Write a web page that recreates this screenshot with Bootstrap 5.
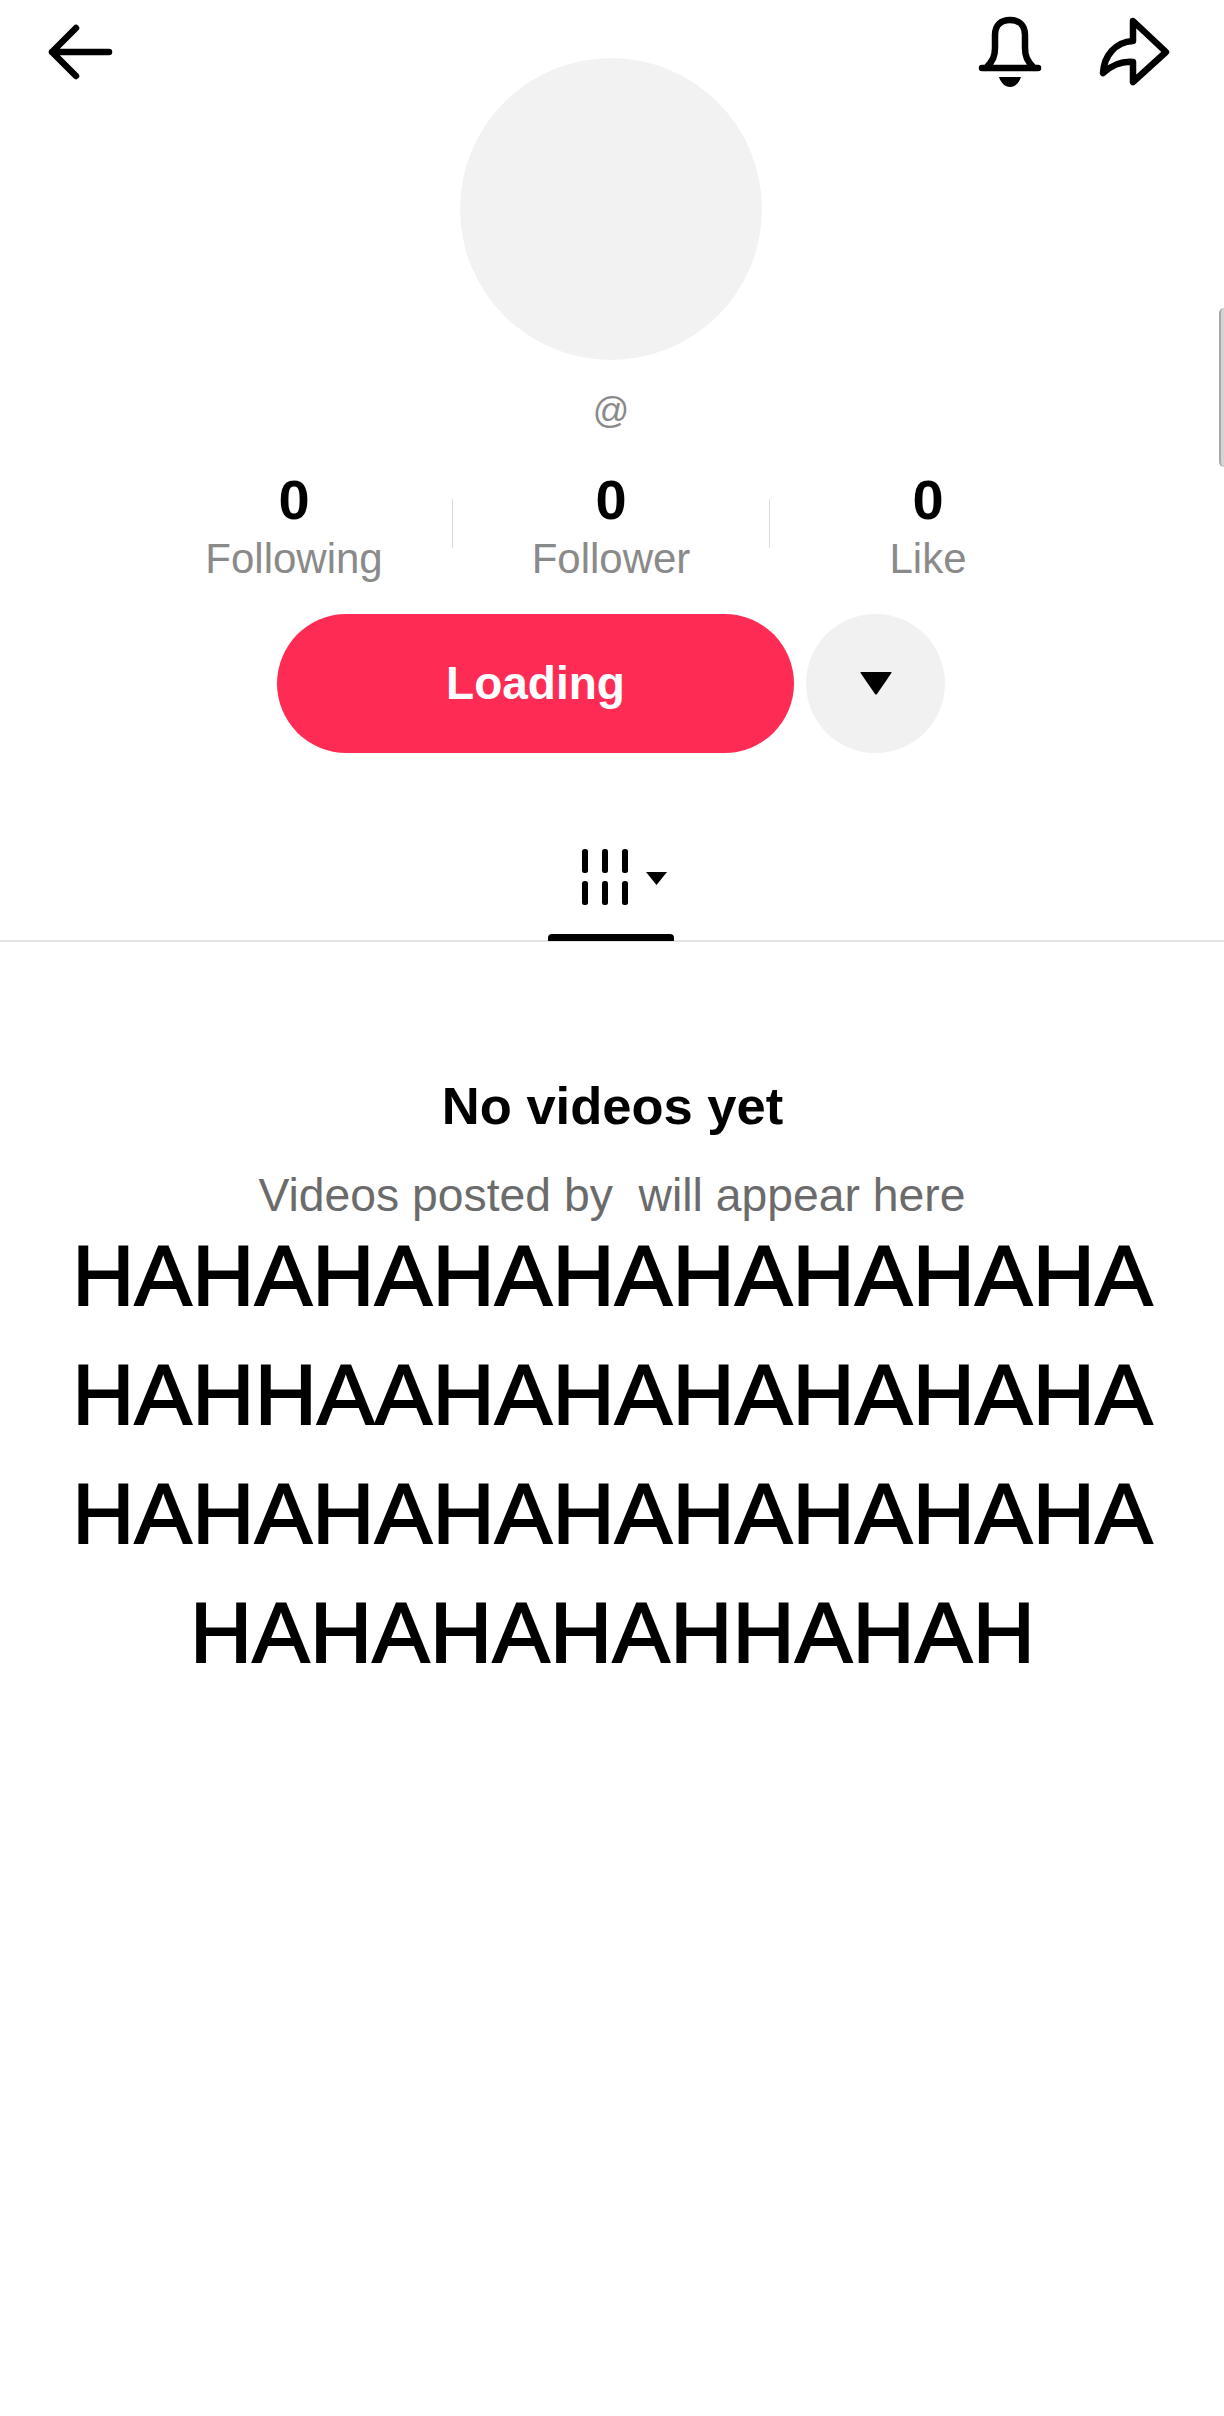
<!DOCTYPE html>
<html lang="en">
  <head>
    <meta charset="UTF-8" />
    <meta name="viewport" content="width=device-width, initial-scale=1.0" />
    <title>Profile</title>
    <link href="https://cdn.jsdelivr.net/npm/bootstrap@5.3.3/dist/css/bootstrap.min.css" rel="stylesheet" />
    <style>
      body { font-family: "Liberation Sans", Arial, sans-serif; background: #fff; color: #000; height: 2416px; overflow: hidden; }
      .page-wrap { position: relative; height: 2416px; overflow: hidden; }
      .top-grid { display: grid; grid-template-columns: 1fr 302px 1fr; padding-right: 3px; }
      .back-icon { display: block; margin: 17px 0 0 42px; }
      .top-actions { padding: 14px 50px 0 0; gap: 55px; }
      .avatar-blank { width: 302px; height: 302px; margin-top: 58px; background: #f2f2f2; }
      .handle-text { font-size: 36px; line-height: 40px; color: #8a8a8a; margin-top: 31px; padding-right: 2px; }
      .stat-row { margin-top: 39px; padding-right: 2px; }
      .stat-col { width: 316px; }
      .stat-num { font-size: 56px; line-height: 60px; font-weight: 700; }
      .stat-label { font-size: 42px; line-height: 50px; color: #8a8a8a; margin-top: 4px; }
      .stat-line { width: 1px; height: 49px; margin-top: 29px; background: #dcdcde; }
      .action-row { margin-top: 30px; gap: 12px; padding-right: 2px; }
      .follow-pill { width: 517px; height: 139px; border: 0; border-radius: 70px; background: #fe2c55; color: #fff; font-size: 46px; font-weight: 700; padding: 0; }
      .more-round { width: 139px; height: 139px; border: 0; border-radius: 50%; background: #f1f1f2; padding: 0; }
      .tab-bar { height: 189px; border-bottom: 2px solid #e3e3e4; position: relative; }
      .tab-icon { display: block; position: absolute; left: 580px; top: 92px; }
      .tab-mark { position: absolute; left: 548px; bottom: -1px; width: 126px; height: 7px; background: #000; border-radius: 4px 4px 0 0; }
      .empty-title { font-size: 52.500px; line-height: 60px; font-weight: 700; margin-top: 134px; padding-left: 1px; }
      .empty-note { font-size: 46.300px; line-height: 54px; color: #6b6b6b; margin-top: 32px; white-space: pre; }
      .shout-text { font-size: 86px; line-height: 119px; margin-top: -6px; padding-left: 1px; letter-spacing: 0.300px; -webkit-text-stroke: 1.800px #000; }
      .edge-handle { position: absolute; right: 0; top: 308px; width: 5px; height: 159px; background: #d4d4d4; border-left: 2px solid #a9a9a9; border-radius: 6px 0 0 6px; }
    </style>
  </head>
  <body>
    <div class="page-wrap">
      <!--top icons and avatar-->
      <div class="top-grid">
        <div>
          <svg class="back-icon" width="76" height="68" viewBox="0 0 76 68" fill="none" stroke="#000" stroke-width="6.5" stroke-linecap="round" stroke-linejoin="round">
            <path d="M34 11 L10 35 L34 59 M10 35 H67" />
          </svg>
        </div>
        <div class="avatar-blank rounded-circle"></div>
        <div class="top-actions d-flex justify-content-end align-items-start">
          <svg width="68" height="76" viewBox="0 0 68 76" fill="none" stroke="#000" stroke-width="6.5" stroke-linecap="round" stroke-linejoin="round">
            <path d="M6 54 H62 M10 54 C17 47 19 42 19 34 V21 C19 11 25 6 34 6 C43 6 49 11 49 21 V34 C49 42 51 47 58 54" />
            <path d="M23 63 H45 C43 69 39 73 34 73 C29 73 25 69 23 63 Z" fill="#000" stroke="none" />
          </svg>
          <svg width="72" height="72" viewBox="0 0 72 72" fill="none" stroke="#000" stroke-width="6.5" stroke-linecap="round" stroke-linejoin="round">
            <path d="M34 7 L67 38 L34 68 V48 C22 47 12 52 4 59 C5 42 16 28 34 27 Z" />
          </svg>
        </div>
      </div>

      <div class="handle-text text-center">@</div>

      <!--stats-->
      <div class="stat-row d-flex justify-content-center">
        <div class="stat-col text-center">
          <div class="stat-num">0</div>
          <div class="stat-label">Following</div>
        </div>
        <div class="stat-line"></div>
        <div class="stat-col text-center">
          <div class="stat-num">0</div>
          <div class="stat-label">Follower</div>
        </div>
        <div class="stat-line"></div>
        <div class="stat-col text-center">
          <div class="stat-num">0</div>
          <div class="stat-label">Like</div>
        </div>
      </div>

      <!--buttons-->
      <div class="action-row d-flex justify-content-center">
        <button class="btn follow-pill" type="button">Loading</button>
        <button class="btn more-round d-flex align-items-center justify-content-center" type="button" aria-label="More">
          <svg width="32" height="23" viewBox="0 0 32 23"><path d="M1 0 H31 Q32 0 31.4 1 L17 22 Q16 23 15 22 L0.6 1 Q0 0 1 0 Z" fill="#000" /></svg>
        </button>
      </div>

      <!--tab-->
      <div class="tab-bar">
        <svg class="tab-icon" width="90" height="60" viewBox="0 0 90 60" fill="#000">
          <rect x="2" y="4" width="6" height="24" rx="2.5" /><rect x="22" y="4" width="6" height="24" rx="2.5" /><rect x="42" y="4" width="6" height="24" rx="2.5" />
          <rect x="2" y="36" width="6" height="24" rx="2.5" /><rect x="22" y="36" width="6" height="24" rx="2.5" /><rect x="42" y="36" width="6" height="24" rx="2.5" />
          <path d="M66 27 H87 L76.500 40 Z" />
        </svg>
        <div class="tab-mark"></div>
      </div>

      <!--empty state-->
      <div class="empty-title text-center">No videos yet</div>
      <div class="empty-note text-center">Videos posted by  will appear here</div>
      <div class="shout-text text-center">HAHAHAHAHAHAHAHAHA<br />HAHHAAHAHAHAHAHAHA<br />HAHAHAHAHAHAHAHAHA<br />HAHAHAHAHHAHAH</div>

      <div class="edge-handle"></div>
    </div>
    <script src="https://cdn.jsdelivr.net/npm/bootstrap@5.3.3/dist/js/bootstrap.bundle.min.js"></script>
  </body>
</html>
